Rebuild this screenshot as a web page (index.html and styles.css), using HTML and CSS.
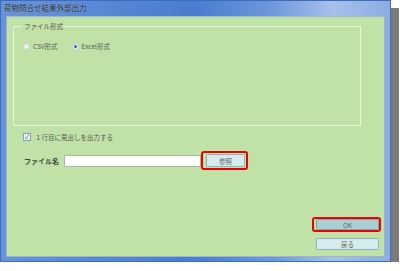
FILE: index.html
```html
<!DOCTYPE html>
<html lang="ja">

<head>
    <meta charset="UTF-8">
    <meta name="viewport" content="width=device-width, initial-scale=1.0">
    <title>荷物問合せ結果外部出力</title>
    <link rel="stylesheet" href="styles.css">
</head>

<body>
    <div class="window">
        <div class="title-bar">荷物問合せ結果外部出力</div>

        <div class="client">
            <fieldset class="group-box">
                <legend>ファイル形式</legend>
                <div class="radio-row">
                    <label class="radio"><span class="radio-mark"></span>CSV形式</label>
                    <label class="radio"><span class="radio-mark checked"></span>Excel形式</label>
                </div>
            </fieldset>

            <label class="check-row"><span class="check-mark">✓</span>１行目に見出しを出力する</label>

            <div class="file-row">
                <span class="file-label">ファイル名</span>
                <span class="file-input"></span>
                <span class="highlight browse-wrap"><button class="btn">参照</button></span>
            </div>

            <div class="actions">
                <span class="highlight ok-wrap"><button class="btn btn-ok">OK</button></span>
                <button class="btn btn-back">戻る</button>
            </div>
        </div>
    </div>
</body>

</html>
```

FILE: styles.css
```css
body {
    margin: 0;
    padding: 0;
    background: #fff;
    font-family: "Noto Sans CJK JP", "Liberation Sans", sans-serif;
    color: #555;
}

.window {
    width: 391px;
    height: 262px;
    box-sizing: border-box;
    display: flex;
    flex-direction: column;
    background: linear-gradient(to right, #6893d8 0%, #4a7ccf 50%, #6f98dc 70%, #a6c0ea 85%, #8cade2 100%);
    border: 1px solid #3d6bbf;
    box-shadow: 8px 8px 0 #7b7b7b;
}

.title-bar {
    height: 15px;
    line-height: 14px;
    padding-left: 3px;
    font-size: 7.5px;
    color: #101a28;
    text-shadow: 0 0 1px rgba(255, 255, 255, 0.6);
}

.client {
    flex: 1;
    margin: 0 5px 4px 5px;
    padding: 4px 5px 0 6px;
    background: #c1e2a7;
    border: 1px solid #9bb6c8;
    display: flex;
    flex-direction: column;
}

.group-box {
    margin: 0 18px 0 0;
    padding: 0 0 0 9px;
    height: 105px;
    box-sizing: border-box;
    border: 1px solid #e9f4df;
}

.group-box legend {
    margin-left: -1px;
    padding: 0 2px;
    font-size: 6.5px;
    color: #555;
}

.radio-row {
    display: flex;
    gap: 14px;
    margin-top: 10px;
}

.radio {
    display: flex;
    align-items: center;
    gap: 3px;
    font-size: 6.5px;
}

.radio-mark {
    width: 5px;
    height: 5px;
    border-radius: 50%;
    background: #eef0ee;
    border: 1px solid #c8ccc8;
    display: flex;
    align-items: center;
    justify-content: center;
}

.radio-mark.checked::after {
    content: "";
    width: 3px;
    height: 3px;
    border-radius: 50%;
    background: #2f63b3;
}

.check-row {
    display: flex;
    align-items: center;
    gap: 4px;
    margin: 6px 0 0 10px;
    font-size: 6.5px;
}

.check-mark {
    width: 6px;
    height: 6px;
    border: 1px solid #8aa0b8;
    background: #e8eef8;
    color: #3a4f8a;
    font-size: 6px;
    line-height: 6px;
    text-align: center;
}

.file-row {
    display: flex;
    align-items: center;
    margin: 9px 0 0 11px;
}

.file-label {
    font-size: 7px;
    font-weight: bold;
    color: #444;
    width: 40px;
}

.file-input {
    width: 135px;
    height: 10px;
    background: #fff;
    border: 1px solid #a8b8a0;
}

.highlight {
    display: inline-flex;
    border: 2px solid #e8000a;
    border-radius: 3px;
}

.browse-wrap {
    margin-left: 0;
    padding: 1px 1px 1px 3px;
}

.btn {
    margin: 0;
    padding: 0;
    box-sizing: border-box;
    font-family: "Noto Sans CJK JP", "Liberation Sans", sans-serif;
    font-size: 6.5px;
    color: #666;
    background: #d5ebee;
    border: 1px solid #8fb4c0;
    border-radius: 1px;
    width: 39px;
    height: 13px;
}

.actions {
    margin-top: auto;
    margin-bottom: 6px;
    display: flex;
    flex-direction: column;
    align-items: flex-end;
    gap: 6px;
}

.ok-wrap {
    padding: 0 0 0 2px;
    margin-right: -2px;
}

.btn-ok {
    width: 63px;
    height: 11px;
    background: #a9cfd0;
    border-color: #7fa8b0;
}

.btn-back {
    width: 63px;
    height: 12px;
}
```
